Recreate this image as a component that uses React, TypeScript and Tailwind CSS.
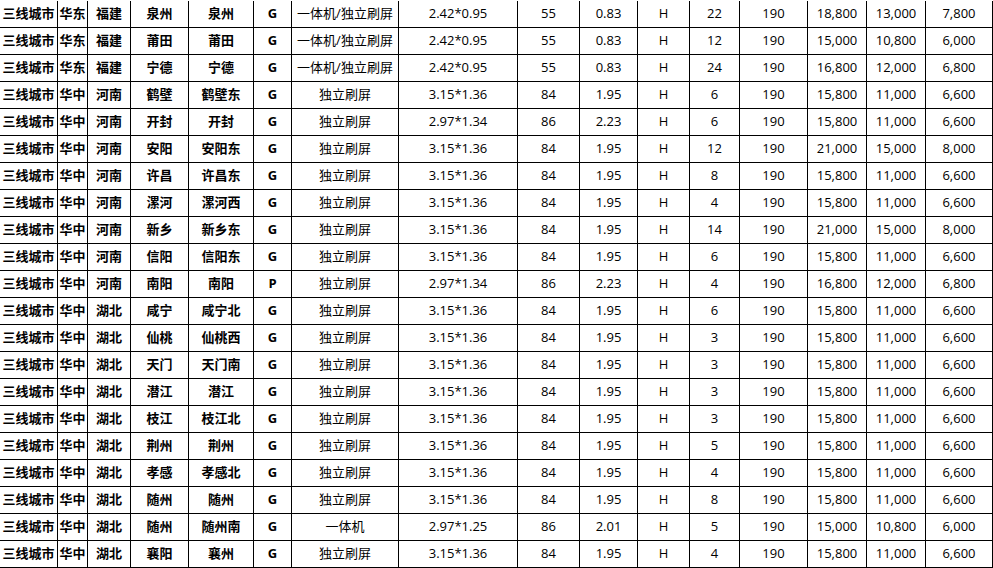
const rows: string[][] = [
  ["华东", "福建", "泉州", "泉州", "G", "一体机/独立刷屏", "2.42*0.95", "55", "0.83", "22", "18,800", "13,000", "7,800"],
  ["华东", "福建", "莆田", "莆田", "G", "一体机/独立刷屏", "2.42*0.95", "55", "0.83", "12", "15,000", "10,800", "6,000"],
  ["华东", "福建", "宁德", "宁德", "G", "一体机/独立刷屏", "2.42*0.95", "55", "0.83", "24", "16,800", "12,000", "6,800"],
  ["华中", "河南", "鹤壁", "鹤壁东", "G", "独立刷屏", "3.15*1.36", "84", "1.95", "6", "15,800", "11,000", "6,600"],
  ["华中", "河南", "开封", "开封", "G", "独立刷屏", "2.97*1.34", "86", "2.23", "6", "15,800", "11,000", "6,600"],
  ["华中", "河南", "安阳", "安阳东", "G", "独立刷屏", "3.15*1.36", "84", "1.95", "12", "21,000", "15,000", "8,000"],
  ["华中", "河南", "许昌", "许昌东", "G", "独立刷屏", "3.15*1.36", "84", "1.95", "8", "15,800", "11,000", "6,600"],
  ["华中", "河南", "漯河", "漯河西", "G", "独立刷屏", "3.15*1.36", "84", "1.95", "4", "15,800", "11,000", "6,600"],
  ["华中", "河南", "新乡", "新乡东", "G", "独立刷屏", "3.15*1.36", "84", "1.95", "14", "21,000", "15,000", "8,000"],
  ["华中", "河南", "信阳", "信阳东", "G", "独立刷屏", "3.15*1.36", "84", "1.95", "6", "15,800", "11,000", "6,600"],
  ["华中", "河南", "南阳", "南阳", "P", "独立刷屏", "2.97*1.34", "86", "2.23", "4", "16,800", "12,000", "6,800"],
  ["华中", "湖北", "咸宁", "咸宁北", "G", "独立刷屏", "3.15*1.36", "84", "1.95", "6", "15,800", "11,000", "6,600"],
  ["华中", "湖北", "仙桃", "仙桃西", "G", "独立刷屏", "3.15*1.36", "84", "1.95", "3", "15,800", "11,000", "6,600"],
  ["华中", "湖北", "天门", "天门南", "G", "独立刷屏", "3.15*1.36", "84", "1.95", "3", "15,800", "11,000", "6,600"],
  ["华中", "湖北", "潜江", "潜江", "G", "独立刷屏", "3.15*1.36", "84", "1.95", "3", "15,800", "11,000", "6,600"],
  ["华中", "湖北", "枝江", "枝江北", "G", "独立刷屏", "3.15*1.36", "84", "1.95", "3", "15,800", "11,000", "6,600"],
  ["华中", "湖北", "荆州", "荆州", "G", "独立刷屏", "3.15*1.36", "84", "1.95", "5", "15,800", "11,000", "6,600"],
  ["华中", "湖北", "孝感", "孝感北", "G", "独立刷屏", "3.15*1.36", "84", "1.95", "4", "15,800", "11,000", "6,600"],
  ["华中", "湖北", "随州", "随州", "G", "独立刷屏", "3.15*1.36", "84", "1.95", "8", "15,800", "11,000", "6,600"],
  ["华中", "湖北", "随州", "随州南", "G", "一体机", "2.97*1.25", "86", "2.01", "5", "15,000", "10,800", "6,000"],
  ["华中", "湖北", "襄阳", "襄州", "G", "独立刷屏", "3.15*1.36", "84", "1.95", "4", "15,800", "11,000", "6,600"],
];

const cell = "flex h-[27px] items-center justify-center border-r border-b border-black whitespace-nowrap overflow-hidden";
const bold = `${cell} font-bold`;

export default function App() {
  return (
    <div className="h-[568px] w-[993px] overflow-hidden bg-white pt-px font-['Open_Sans','Noto_Sans_CJK_SC',sans-serif] text-[13px] text-black">
      <div className="grid grid-cols-[58px_30px_43px_58px_65px_38px_107px_119px_62px_58px_52px_50px_68px_59px_59px_67px]">
        {rows.map((r, i) => (
          <div key={i} className="contents">
            <div className={bold}>三线城市</div>
            <div className={bold}>{r[0]}</div>
            <div className={bold}>{r[1]}</div>
            <div className={bold}>{r[2]}</div>
            <div className={bold}>{r[3]}</div>
            <div className={bold}>{r[4]}</div>
            <div className={cell}>{r[5]}</div>
            <div className={cell}>{r[6]}</div>
            <div className={cell}>{r[7]}</div>
            <div className={cell}>{r[8]}</div>
            <div className={cell}>H</div>
            <div className={cell}>{r[9]}</div>
            <div className={cell}>190</div>
            <div className={cell}>{r[10]}</div>
            <div className={cell}>{r[11]}</div>
            <div className={cell}>{r[12]}</div>
          </div>
        ))}
      </div>
    </div>
  );
}
